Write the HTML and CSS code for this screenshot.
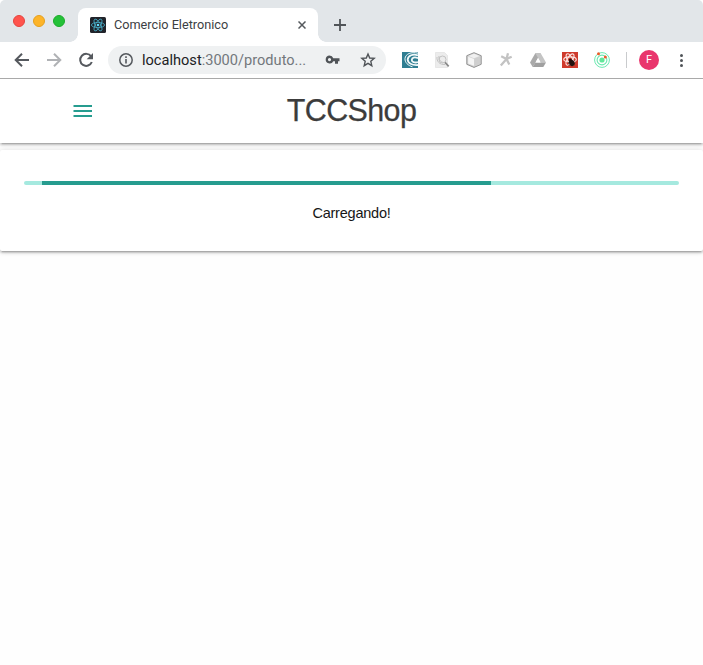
FILE: index.html
```html
<!DOCTYPE html>
<html lang="pt-BR">
<head>
<meta charset="utf-8">
<title>Comercio Eletronico</title>
<link rel="stylesheet" href="styles.css">
</head>
<body>
<header class="browser">
  <div class="tabstrip">
    <div class="lights"><i class="light red"></i><i class="light yellow"></i><i class="light green"></i></div>
    <div class="tab">
      <svg class="favicon" width="16" height="16" viewBox="0 0 16 16"><rect width="16" height="16" rx="1.5" fill="#20232a"/><g fill="none" stroke="#47a9c3" stroke-width=".85"><ellipse cx="8" cy="8" rx="6.6" ry="2.6"/><ellipse cx="8" cy="8" rx="6.6" ry="2.6" transform="rotate(60 8 8)"/><ellipse cx="8" cy="8" rx="6.6" ry="2.6" transform="rotate(120 8 8)"/></g><circle cx="8" cy="8" r="1.3" fill="#61dafb"/></svg>
      <span class="tab-title">Comercio Eletronico</span>
      <svg class="tab-close" width="8" height="8" viewBox="0 0 8 8"><path d="M.5.5l7 7M7.5.5l-7 7" stroke="#55595d" stroke-width="1.5"/></svg>
    </div>
    <svg class="new-tab" width="12" height="12" viewBox="0 0 12 12"><path d="M6 0v12M0 6h12" stroke="#505458" stroke-width="1.8"/></svg>
  </div>
  <div class="toolbar">
    <svg class="nav-icon" width="16" height="16" viewBox="0 0 16 16" fill="none" stroke="#55595e" stroke-width="2"><path d="M15 8H2.5M8 1.7L1.7 8 8 14.3"/></svg>
    <svg class="nav-icon" width="16" height="16" viewBox="0 0 16 16" fill="none" stroke="#b0b2b5" stroke-width="2"><path d="M1 8h12.5M8 1.7l6.300 6.300L8 14.300"/></svg>
    <svg class="nav-icon" width="16" height="16" viewBox="0 0 16 16"><path d="M13.100 4.400A6 6 0 1 0 13.800 10" fill="none" stroke="#55595e" stroke-width="2"/><path d="M15 1v6.300H8.700z" fill="#55595e"/></svg>
    <div class="address">
      <svg width="16" height="16" viewBox="0 0 16 16"><circle cx="8" cy="8" r="6.200" fill="none" stroke="#55595e" stroke-width="1.500"/><path d="M8 7v4.500M8 4.300v1.600" stroke="#55595e" stroke-width="1.600"/></svg>
      <span class="url">localhost<span class="path">:3000/produto...</span></span>
      <svg class="key" width="15" height="10" viewBox="0 0 15 10"><path fill="#505458" fill-rule="evenodd" d="M4.500.5a4 4 0 0 1 3.800 2.700H14.500v3H13v2.600h-3V6.200H8.300A4 4 0 1 1 4.500.5zm0 2.500a1.600 1.600 0 1 0 0 3.200 1.600 1.600 0 0 0 0-3.200z"/></svg>
      <svg class="star" width="16" height="16" viewBox="0 0 16 16"><path d="M8 2l1.700 4 4.500.4-3.400 2.900 1 4.400L8 11.400l-3.800 2.300 1-4.400-3.400-2.900 4.500-.4z" fill="none" stroke="#505458" stroke-width="1.400"/></svg>
    </div>
    <div class="extensions">
      <svg width="16" height="16" viewBox="0 0 16 16"><path fill="#2f7e92" d="M0 0h16v16H0z"/><g fill="none" stroke="#f1f8f9"><path d="M16 1.200C9-.5 3.500 2 3 6.500c-.3 4 3 7 7.500 8.300" stroke-width="1"/><path d="M16 3.500C11 1.500 6 3.500 5.700 7.500c0 3.500 4 6 10.300 5.500" stroke-width="1.800"/><path d="M16 6.200c-3.500-1.500-6-.5-6.200 1.600C9.600 10 12.500 11 16 10.200" stroke-width="1.800"/></g></svg>
      <svg width="16" height="16" viewBox="0 0 16 16"><path fill="#ececec" stroke="#dedede" stroke-width=".6" d="M1.500.5h9l3 3v12h-12z"/><g fill="none" stroke="#bdbdbd" stroke-width=".9"><circle cx="8.500" cy="7.500" r="3.500"/><path d="M3 5c-.5 4 2.500 8 8 7.500M5 4c-.6 3 1.200 6 4.500 6.500"/><path d="M11 10.300l3.700 4" stroke="#888" stroke-width="1.700"/></g></svg>
      <svg width="16" height="16" viewBox="0 0 16 16"><path fill="#d5d5d5" stroke="#929292" d="M8 .7l7.200 3v8.600L8 15.400.8 12.300V3.700z"/><path fill="#f0f0f0" d="M8 1.800l5.500 2.300L8 6.300 2.500 4.100z"/><path fill="#cfcfcf" d="M8.400 6.700L14 4.500v7l-5.600 2.700z"/><path fill="#f5f5f5" d="M2.200 4.700L8 7v6.800l-5.800-2.400z"/></svg>
      <svg width="16" height="16" viewBox="0 0 16 16"><path d="M8.500 7L10 1.200M8.500 7L3.200 4.200M8.500 7l5.200-2.200M8.500 7l2.800 5.500M8.500 7L2.800 13.500" fill="none" stroke="#c3c3c3" stroke-width="2.300"/></svg>
      <svg width="16" height="16" viewBox="0 0 16 16"><path fill="#aaa" d="M5.300 1.300h5.400L5.400 10.700 2.700 15 0 10.500z"/><path fill="#c4c4c4" d="M5.300 1.300h5.400L16 10.500h-5.300z"/><path fill="#a0a0a0" d="M5.400 10.500H16L13.300 15H2.700z"/><path fill="#fff" d="M8 6l2.500 4.500h-5z"/></svg>
      <svg width="16" height="16" viewBox="0 0 16 16"><path fill="#cf3a2c" d="M0 0h16v16H0z"/><g fill="none" stroke="#fbe4e1" stroke-width="1.100"><ellipse cx="8" cy="7.500" rx="6.300" ry="2.600"/><ellipse cx="8" cy="7.500" rx="6.300" ry="2.600" transform="rotate(60 8 7.500)"/><ellipse cx="8" cy="7.500" rx="6.300" ry="2.600" transform="rotate(120 8 7.500)"/></g><ellipse cx="9.800" cy="11" rx="2.700" ry="3.300" fill="#26110e" transform="rotate(-30 9.800 11)"/><circle cx="8.300" cy="7.900" r="1.500" fill="#26110e"/><path d="M6 11l6.500-2M6.500 13.300L13 11" stroke="#26110e" stroke-width=".8"/></svg>
      <svg width="16" height="16" viewBox="0 0 16 16"><g fill="none" stroke="#6be8b0"><circle cx="8" cy="8" r="7.400"/><circle cx="8" cy="8" r="4.900" stroke-width="1.100"/></g><circle cx="8" cy="8" r="2.600" fill="#62e79a"/><circle cx="4.500" cy="1.700" r="1.500" fill="#f05a28"/><circle cx="11.300" cy="5" r="1.500" fill="#f05a28"/></svg>
    </div>
    <span class="divider"></span>
    <span class="avatar">F</span>
    <svg class="menu-dots" width="4" height="14" viewBox="0 0 4 14" fill="#505458"><circle cx="2.500" cy="2.500" r="1.500"/><circle cx="2.500" cy="7.500" r="1.500"/><circle cx="2.500" cy="12.500" r="1.500"/></svg>
  </div>
</header>
<nav class="navbar">
  <svg class="hamburger" width="19" height="12" viewBox="0 0 19 12"><path fill="#269c8f" d="M.5 0H19v2H.5zM.5 5H19v2H.5zM.5 10H19v2H.5z"/></svg>
  <h1 class="brand">TCCShop</h1>
</nav>
<main class="card">
  <div class="progress"><div class="bar"></div></div>
  <p class="message">Carregando!</p>
</main>
</body>
</html>
```

FILE: styles.css
```css
* { box-sizing: border-box; }
body { margin: 0; height: 665px; overflow: hidden; background: #fefefe; font: 14.5px "Liberation Sans", sans-serif; color: #161616; }
svg { display: block; flex: none; }
.browser { height: 79px; background: #fff; border-bottom: 1px solid #a9a9a9; font-family: Roboto, sans-serif; }
.tabstrip { height: 42px; display: flex; background: #e2e6e9; border-radius: 5px 5px 0 0; }
.lights { display: flex; gap: 8px; width: 78px; padding: 15px 0 0 13px; }
.light { width: 12px; height: 12px; border-radius: 50%; border: 1px solid; }
.red { background: #ff544d; border-color: #e5443e; }
.yellow { background: #fdb429; border-color: #e5a01e; }
.green { background: #24c138; border-color: #1bac2a; }
.tab { position: relative; width: 240px; height: 34px; margin-top: 8px; padding: 0 12px; display: flex; align-items: center; background: #fff; border-radius: 8px 8px 0 0; }
.tab::before, .tab::after { content: ""; position: absolute; bottom: 0; width: 8px; height: 8px; }
.tab::before { left: -8px; background: radial-gradient(circle at 0 0, transparent 7.5px, #fff 8px); }
.tab::after { right: -8px; background: radial-gradient(circle at 100% 0, transparent 7.5px, #fff 8px); }
.tab-title { margin-left: 8px; padding-bottom: 2px; font-size: 12.7px; color: #3c4043; white-space: nowrap; }
.tab-close { margin-left: auto; }
.new-tab { margin: 19px 0 0 16px; }
.toolbar { height: 36px; padding-left: 14px; display: flex; align-items: center; }
.nav-icon { margin-right: 16px; }
.address { width: 278px; height: 28px; margin-left: -2px; padding: 0 10px; display: flex; align-items: center; border-radius: 14px; background: #eff1f2; }
.url { width: 165px; margin-left: 8px; font-size: 14.6px; color: #202124; white-space: nowrap; }
.path { color: #73787d; }
.key { margin-left: 18px; }
.star { margin-left: auto; }
.extensions { display: flex; gap: 16px; margin-left: 16px; }
.divider { width: 1px; height: 16px; margin-left: 16px; background: #c9cbcd; }
.avatar { width: 20px; height: 20px; margin-left: 12px; border-radius: 50%; background: #e9356d; color: #fff; font-size: 11px; line-height: 20px; text-align: center; }
.menu-dots { margin-left: 20px; }
.navbar, .card { background: #fff; box-shadow: 0 2px 2px 0 rgba(0,0,0,.14), 0 3px 1px -2px rgba(0,0,0,.12), 0 1px 5px 0 rgba(0,0,0,.2); }
.navbar { height: 64px; display: grid; grid-template-columns: 1fr auto 1fr; align-items: center; clip-path: inset(0 0 -7px 0); }
.hamburger { margin-left: 73px; }
.brand { margin: 0; padding-bottom: 1px; font-size: 30.45px; font-weight: 400; line-height: 63px; letter-spacing: -.6px; color: #3c3c3c; -webkit-text-stroke: .25px #3c3c3c; }
.card { height: 101px; margin-top: 7px; padding: 31px 24px 0; border-radius: 2px; }
.progress { height: 4px; overflow: hidden; border-radius: 2px; background: #a5e9df; }
.bar { width: 449px; height: 4px; margin-left: 18px; background: #269c8f; }
.message { margin: 17px 0 0; line-height: 22px; letter-spacing: -.22px; text-align: center; }
```
